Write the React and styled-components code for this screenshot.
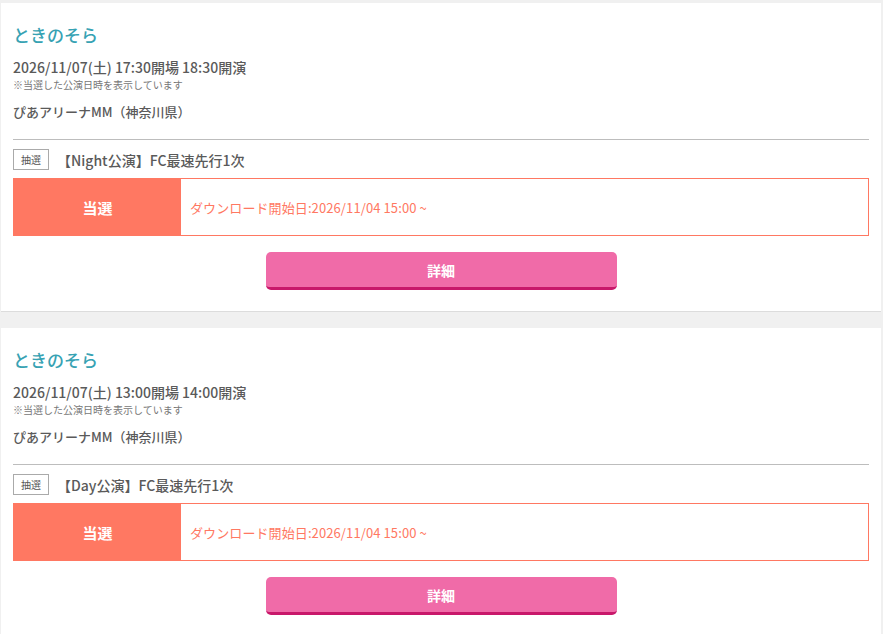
import React from 'react';
import styled, { createGlobalStyle } from 'styled-components';

const GlobalStyle = createGlobalStyle`
  html, body {
    margin: 0;
    padding: 0;
    background: #f0f0f0;
  }
  body {
    font-family: "Noto Sans CJK JP", "Noto Sans", sans-serif;
    color: #555;
  }
`;

const Page = styled.div`
  padding: 3px 2px 0 1px;
  display: flex;
  flex-direction: column;
  gap: 17px;
`;

const Card = styled.section`
  background: #fff;
  padding: 20px 12px 21px;
  box-shadow: 0 1px 0 #dcdcdc;
`;

const Title = styled.h2`
  margin: 0;
  font-size: 17px;
  line-height: 24px;
  font-weight: 500;
  color: #37a2b3;
`;

const DateLine = styled.p`
  margin: 10px 0 0;
  font-size: 14px;
  line-height: 20px;
  font-weight: 500;
  color: #5a5a5a;
`;

const Note = styled.p`
  margin: 1px 0 0;
  font-size: 10px;
  line-height: 14px;
  color: #777;
`;

const Venue = styled.p`
  margin: 10px 0 0;
  font-size: 13px;
  line-height: 20px;
  font-weight: 500;
  color: #5a5a5a;
  padding-bottom: 17px;
  border-bottom: 1px solid #bdbdbd;
`;

const TicketRow = styled.div`
  display: flex;
  align-items: center;
  gap: 8px;
  margin-top: 9px;
  height: 21px;
`;

const Tag = styled.span`
  display: inline-flex;
  align-items: center;
  justify-content: center;
  box-sizing: border-box;
  width: 36px;
  height: 21px;
  border: 1px solid #aaa;
  font-size: 10px;
  color: #555;
`;

const TicketName = styled.span`
  font-size: 14px;
  font-weight: 500;
  color: #5a5a5a;
`;

const Status = styled.div`
  display: flex;
  margin-top: 8px;
  height: 58px;
  box-sizing: border-box;
  border: 1px solid #ff7862;
`;

const Result = styled.div`
  width: 167px;
  background: #ff7862;
  color: #fff;
  font-size: 15px;
  font-weight: 700;
  display: flex;
  align-items: center;
  justify-content: center;
`;

const Download = styled.div`
  flex: 1;
  display: flex;
  align-items: center;
  padding-left: 9px;
  font-size: 13px;
  letter-spacing: 0.1px;
  color: #ff7862;
`;

const ButtonWrap = styled.div`
  display: flex;
  justify-content: center;
  margin-top: 16px;
`;

const DetailButton = styled.button`
  width: 351px;
  height: 38px;
  box-sizing: border-box;
  border: none;
  border-bottom: 3px solid #c8186a;
  border-radius: 5px;
  background: #f06ba8;
  color: #fff;
  font-family: inherit;
  font-size: 14px;
  font-weight: 700;
  cursor: pointer;
  padding: 0;
`;

const entries = [
  {
    id: 1,
    artist: 'ときのそら',
    date: '2026/11/07(土) 17:30開場 18:30開演',
    venue: 'ぴあアリーナMM（神奈川県）',
    ticket: '【Night公演】FC最速先行1次',
    download: 'ダウンロード開始日:2026/11/04 15:00 ~',
  },
  {
    id: 2,
    artist: 'ときのそら',
    date: '2026/11/07(土) 13:00開場 14:00開演',
    venue: 'ぴあアリーナMM（神奈川県）',
    ticket: '【Day公演】FC最速先行1次',
    download: 'ダウンロード開始日:2026/11/04 15:00 ~',
  },
];

const App = () => (
  <>
    <GlobalStyle />
    <Page>
      {entries.map((e) => (
        <Card key={e.id}>
          <Title>{e.artist}</Title>
          <DateLine>{e.date}</DateLine>
          <Note>※当選した公演日時を表示しています</Note>
          <Venue>{e.venue}</Venue>
          <TicketRow>
            <Tag>抽選</Tag>
            <TicketName>{e.ticket}</TicketName>
          </TicketRow>
          <Status>
            <Result>当選</Result>
            <Download>{e.download}</Download>
          </Status>
          <ButtonWrap>
            <DetailButton>詳細</DetailButton>
          </ButtonWrap>
        </Card>
      ))}
    </Page>
  </>
);

export default App;
